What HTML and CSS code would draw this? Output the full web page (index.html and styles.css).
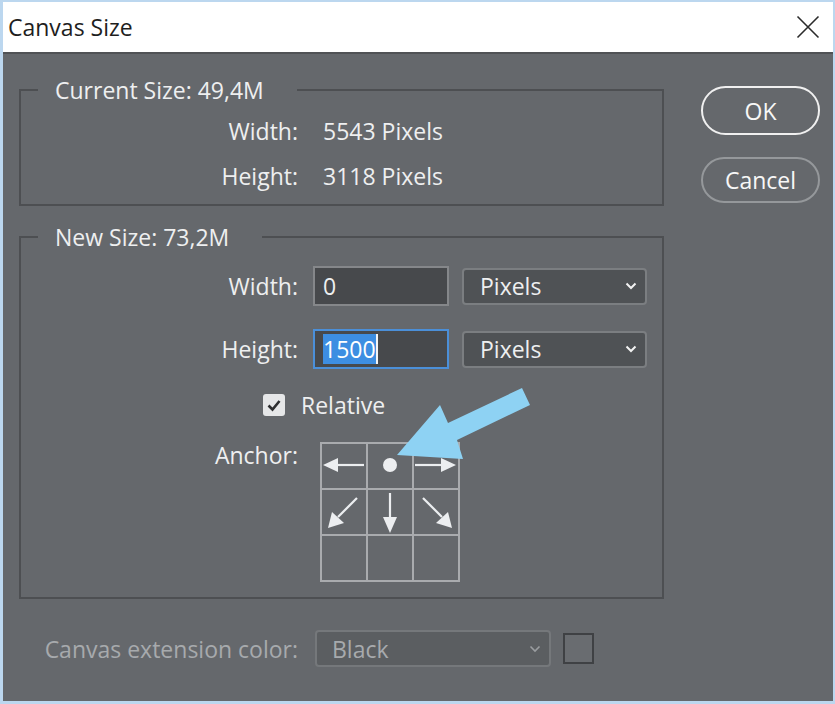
FILE: index.html
```html
<!DOCTYPE html>
<html lang="en">
<head>
<meta charset="utf-8">
<title>Canvas Size</title>
<link rel="stylesheet" href="styles.css">
</head>
<body>
<div class="window">
  <div class="titlebar">
    <span class="title">Canvas Size</span>
    <svg class="close" width="24" height="24" viewBox="0 0 24 24"><path d="M1.5 1.5 L22.5 22.5 M22.5 1.5 L1.5 22.5" stroke="#2b2b2b" stroke-width="1.6" fill="none"/></svg>
  </div>
  <div class="dialog">
    <div class="top">
      <div class="groups">
        <fieldset class="group current">
          <legend>Current Size: 49,4M</legend>
          <div class="kv">
            <span class="k">Width:</span><span class="v">5543 Pixels</span>
            <span class="k">Height:</span><span class="v">3118 Pixels</span>
          </div>
        </fieldset>
        <fieldset class="group newsize">
          <legend>New Size: 73,2M</legend>
          <div class="row first">
            <span class="label">Width:</span>
            <div class="field"><span>0</span></div>
            <div class="select"><span>Pixels</span><svg width="12" height="8" viewBox="0 0 12 8"><path d="M1.5 1.5 L6 6 L10.5 1.5" stroke="#f2f2f2" stroke-width="2" fill="none"/></svg></div>
          </div>
          <div class="row second">
            <span class="label">Height:</span>
            <div class="field focused"><span class="sel">1500</span><span class="caret"></span></div>
            <div class="select"><span>Pixels</span><svg width="12" height="8" viewBox="0 0 12 8"><path d="M1.5 1.5 L6 6 L10.5 1.5" stroke="#f2f2f2" stroke-width="2" fill="none"/></svg></div>
          </div>
          <div class="check-row">
            <span class="checkbox"><svg width="22" height="22" viewBox="0 0 22 22"><path d="M5.5 11.5 L9.5 15.5 L16.5 7" stroke="#2e2f31" stroke-width="2.6" fill="none"/></svg></span>
            <span class="check-label">Relative</span>
          </div>
          <div class="anchor-row">
            <span class="label">Anchor:</span>
            <div class="anchor">
              <div class="cell"><svg viewBox="0 0 44 44"><path d="M15 21 H42" stroke="#eceef0" stroke-width="2.2"/><path d="M1 21 L16 14 L16 28 Z" fill="#eceef0"/></svg></div>
              <div class="cell"><svg viewBox="0 0 44 44"><circle cx="22" cy="21" r="7" fill="#eceef0"/></svg></div>
              <div class="cell"><svg viewBox="0 0 44 44"><path d="M1 21 H29" stroke="#eceef0" stroke-width="2.2"/><path d="M42 21 L27 14 L27 28 Z" fill="#eceef0"/></svg></div>
              <div class="cell"><svg viewBox="0 0 44 44"><path d="M35 8 L16 27" stroke="#eceef0" stroke-width="2.2"/><path d="M6 38 L10 22 L22 33 Z" fill="#eceef0"/></svg></div>
              <div class="cell"><svg viewBox="0 0 44 44"><path d="M22 3 V30" stroke="#eceef0" stroke-width="2.2"/><path d="M22 43 L15 27 L29 27 Z" fill="#eceef0"/></svg></div>
              <div class="cell"><svg viewBox="0 0 44 44"><path d="M9 8 L28 27" stroke="#eceef0" stroke-width="2.2"/><path d="M38 38 L22 33 L34 22 Z" fill="#eceef0"/></svg></div>
              <div class="cell"></div>
              <div class="cell"></div>
              <div class="cell"></div>
            </div>
          </div>
        </fieldset>
      </div>
      <div class="buttons">
        <div class="btn ok">OK</div>
        <div class="btn cancel">Cancel</div>
      </div>
    </div>
    <div class="bottom-row">
      <span class="label">Canvas extension color:</span>
      <div class="select disabled"><span>Black</span><svg width="12" height="8" viewBox="0 0 12 8"><path d="M1.5 1.5 L6 6 L10.5 1.5" stroke="#9a9da0" stroke-width="1.6" fill="none"/></svg></div>
      <div class="swatch"></div>
    </div>
  </div>
  <svg class="pointer" width="835" height="704" viewBox="0 0 835 704"><polygon points="522,388 530,405 457,440 463,459 397,455 440,405 448,423" fill="#8ed2f3"/></svg>
</div>
</body>
</html>
```
FILE: styles.css
```css
html, body {
  margin: 0;
  padding: 0;
}
body {
  width: 835px;
  height: 704px;
  overflow: hidden;
  font-family: "Open Sans", "Noto Sans", sans-serif;
  font-size: 23px;
  line-height: 28px;
}
.window {
  position: relative;
  width: 835px;
  height: 704px;
  box-sizing: border-box;
  background: #bcd7ef;
  padding: 2px 2px 3px 3px;
  display: flex;
  flex-direction: column;
}
.titlebar {
  height: 50px;
  background: #ffffff;
  display: flex;
  align-items: center;
  justify-content: space-between;
  padding: 0 13px 0 5px;
  flex: none;
}
.title {
  color: #1e1e1e;
}
.close {
  display: block;
}
.dialog {
  flex: 1;
  background: #65686c;
  border-top: 2px solid #505255;
  padding-left: 16px;
  display: flex;
  flex-direction: column;
  color: #eeeff0;
}
.top {
  display: flex;
}
.groups {
  width: 645px;
}
.group {
  margin: 0;
  padding: 0;
  border: 2px solid #4d4f52;
  min-width: 0;
}
.group legend {
  margin-left: 17px;
  padding: 0 33px 0 17px;
}
.current {
  margin-top: 22px;
}
.kv {
  display: grid;
  grid-template-columns: 277px auto;
  column-gap: 25px;
  grid-auto-rows: 45px;
  align-items: center;
  margin: 4px 0 6px;
}
.k {
  text-align: right;
}
.newsize {
  margin-top: 17px;
  padding-bottom: 15px;
}
.row {
  display: flex;
  align-items: center;
  height: 40px;
}
.row.first {
  margin-top: 15px;
}
.row.second {
  margin-top: 23px;
}
.label {
  width: 277px;
  flex: none;
  text-align: right;
}
.field {
  margin-left: 15px;
  width: 136px;
  height: 40px;
  box-sizing: border-box;
  background: #47494c;
  border: 2px solid #85878a;
  display: flex;
  align-items: center;
  padding-left: 8px;
}
.field.focused {
  border-color: #4b8fd8;
}
.sel {
  background: #3d8ee2;
  color: #ffffff;
  line-height: 30px;
}
.caret {
  width: 2px;
  height: 30px;
  background: #f4f4f4;
}
.select {
  margin-left: 13px;
  width: 185px;
  height: 37px;
  box-sizing: border-box;
  background: #4f5255;
  border: 2px solid #7b7e81;
  border-radius: 4px;
  display: flex;
  align-items: center;
  justify-content: space-between;
  padding: 0 8px 0 16px;
}
.select svg {
  display: block;
}
.check-row {
  display: flex;
  align-items: center;
  margin-top: 22px;
  padding-left: 242px;
}
.checkbox {
  width: 22px;
  height: 22px;
  background: #e6e7e8;
  border-radius: 3px;
  display: block;
}
.checkbox svg {
  display: block;
}
.check-label {
  margin-left: 16px;
}
.anchor-row {
  display: flex;
  align-items: flex-start;
  margin-top: 22px;
}
.anchor {
  margin-left: 22px;
  margin-top: 1px;
  display: grid;
  grid-template-columns: repeat(3, 46px);
  grid-template-rows: repeat(3, 46px);
  border-left: 2px solid #a9abae;
  border-top: 2px solid #a9abae;
}
.cell {
  border-right: 2px solid #a9abae;
  border-bottom: 2px solid #a9abae;
}
.cell svg {
  display: block;
  width: 44px;
  height: 44px;
}
.buttons {
  margin-left: 37px;
  margin-top: 32px;
  width: 119px;
  display: flex;
  flex-direction: column;
}
.btn {
  box-sizing: border-box;
  border-radius: 25px;
  display: flex;
  align-items: center;
  justify-content: center;
  color: #f7f7f7;
}
.ok {
  height: 49px;
  border: 2px solid #f0f0f0;
}
.cancel {
  height: 46px;
  margin-top: 22px;
  border: 2px solid #95989b;
}
.bottom-row {
  display: flex;
  align-items: center;
  margin-top: 31px;
  color: #a7aaad;
}
.bottom-row .label {
  width: 279px;
}
.select.disabled {
  margin-left: 17px;
  width: 236px;
  background: #5b5e61;
  border-color: #75787b;
  padding-left: 15px;
  padding-right: 8px;
}
.swatch {
  margin-left: 12px;
  width: 31px;
  height: 31px;
  box-sizing: border-box;
  border: 2px solid #3f4144;
  background: #696c70;
}
.pointer {
  position: absolute;
  left: 0;
  top: 0;
  pointer-events: none;
}
```
